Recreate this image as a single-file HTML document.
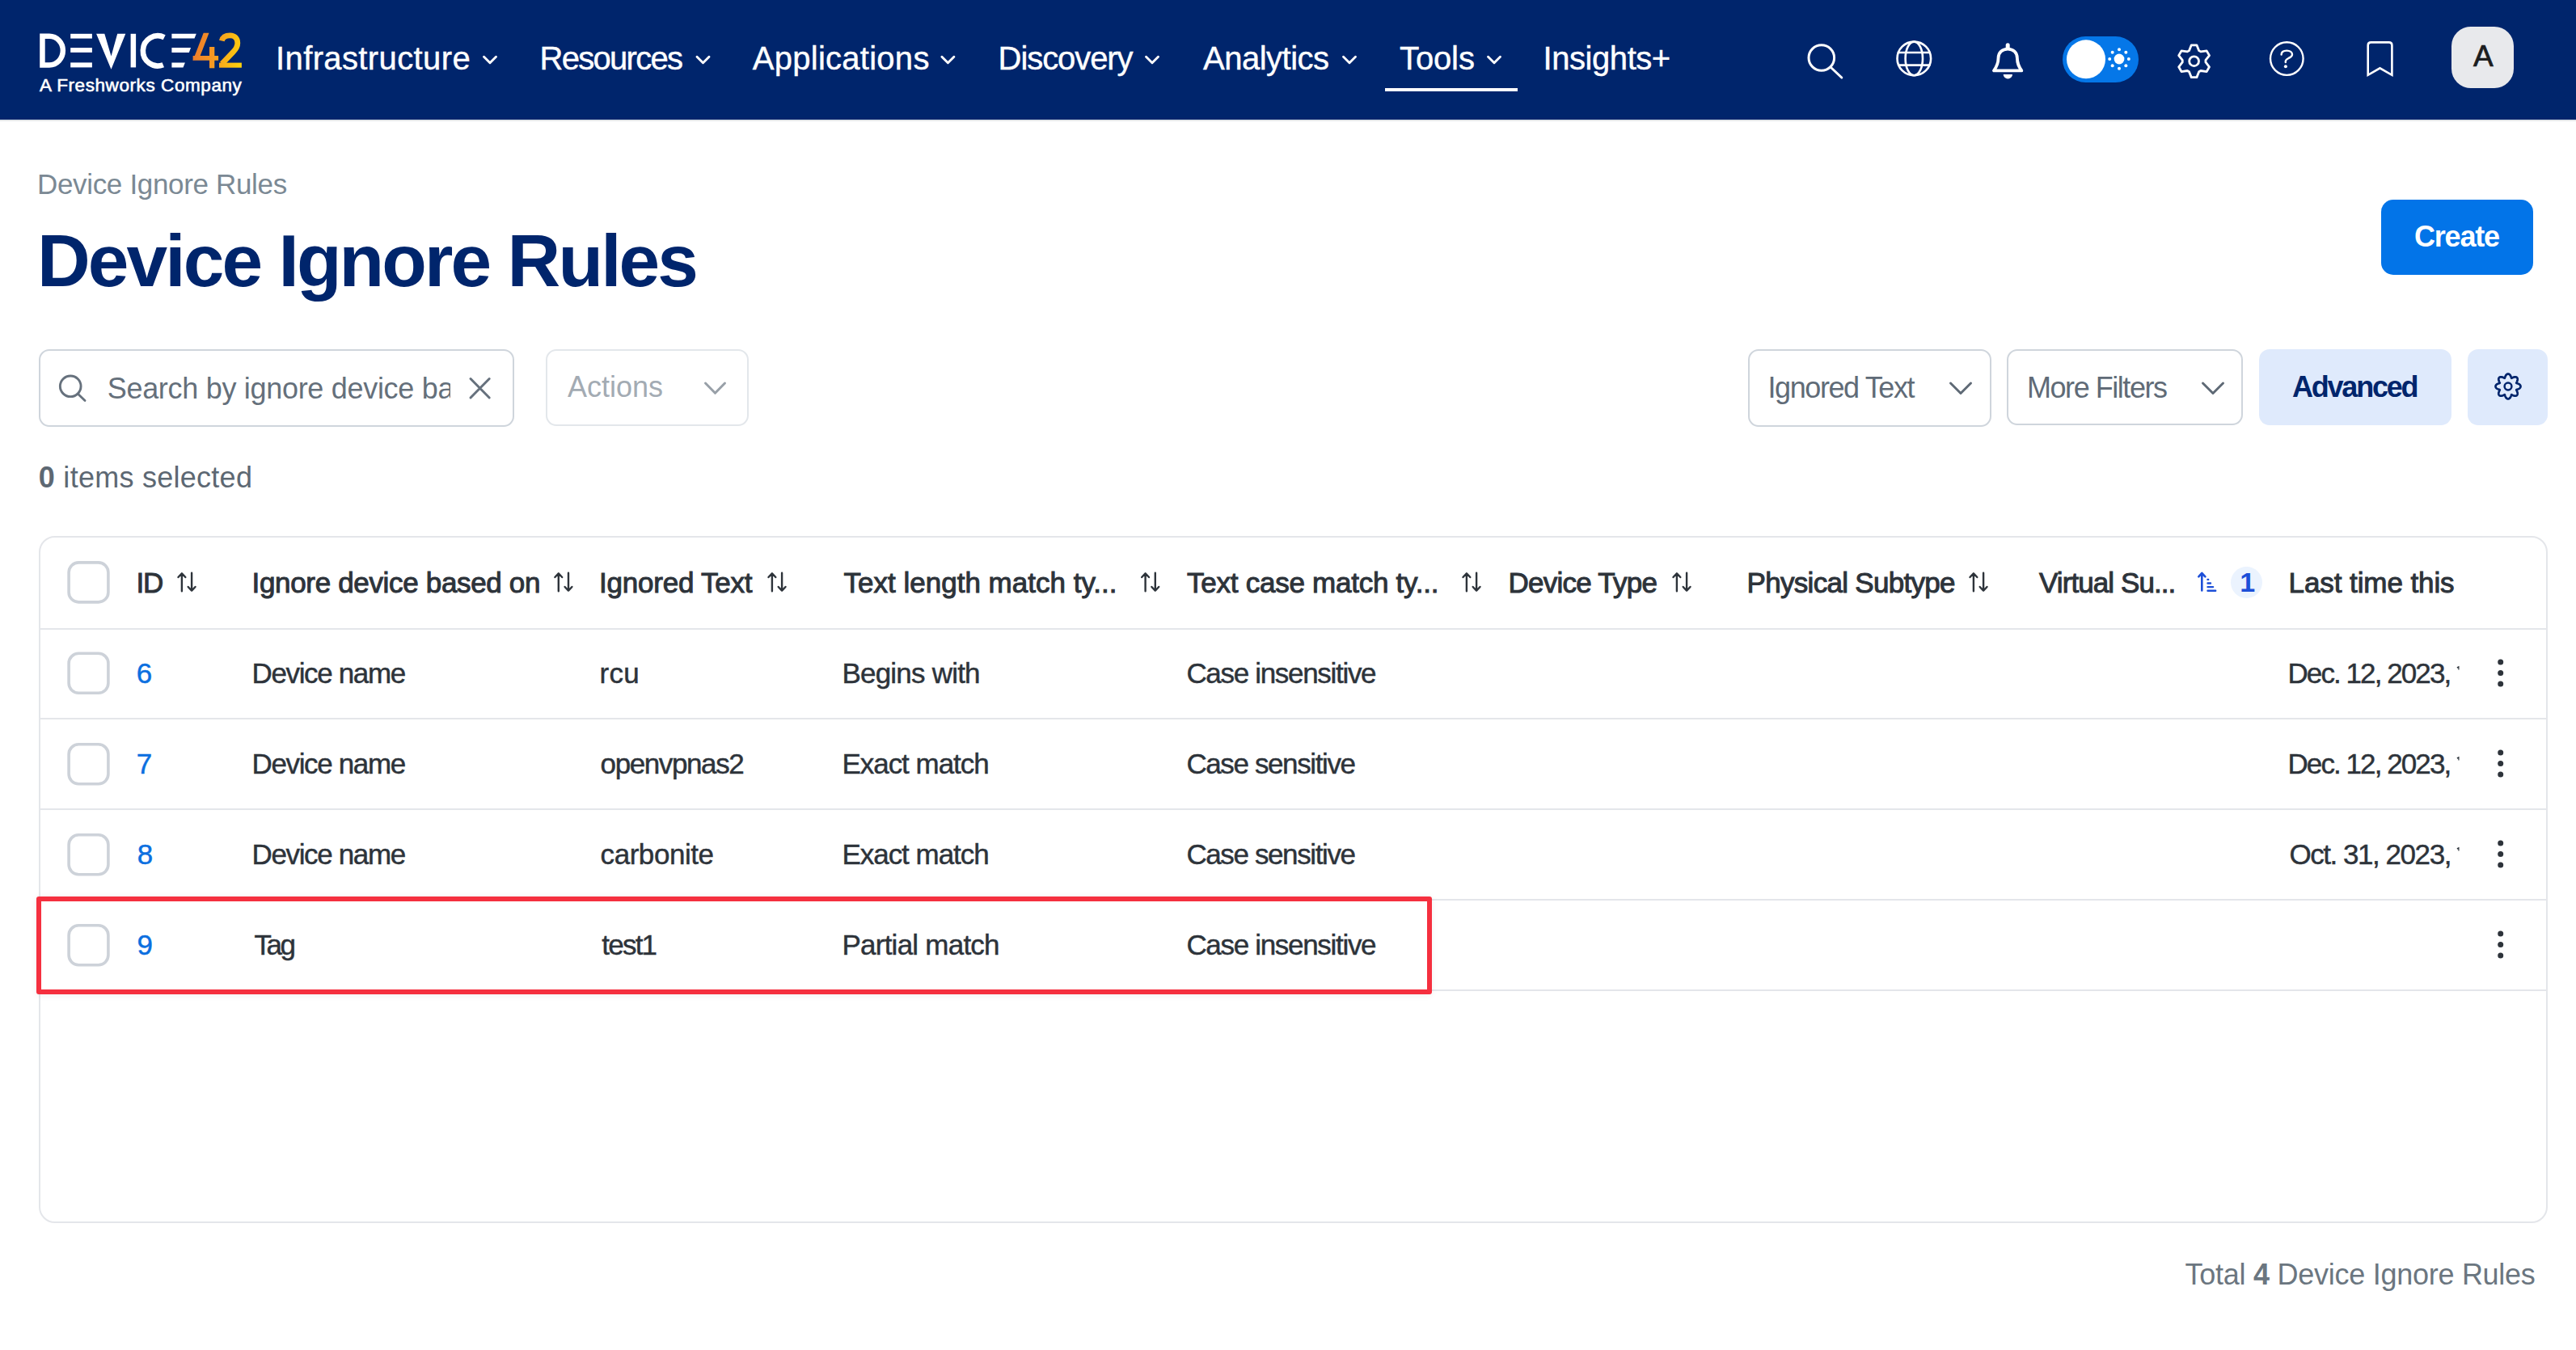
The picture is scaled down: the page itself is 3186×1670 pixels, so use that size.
<!DOCTYPE html>
<html><head><meta charset="utf-8"><title>Device Ignore Rules</title>
<style>
html,body{margin:0;padding:0;background:#fff;}
body{width:3186px;height:1670px;position:relative;overflow:hidden;font-family:"Liberation Sans",sans-serif;}
.t{position:absolute;white-space:nowrap;line-height:1;}
.clip{position:absolute;overflow:hidden;}
.box{position:absolute;box-sizing:border-box;}
svg{position:absolute;left:0;top:0;overflow:visible;}
.cb{position:absolute;box-sizing:border-box;width:52px;height:52px;border:3.3px solid #cdd2d8;border-radius:13px;background:#fff;}
</style></head>
<body>
<!-- header -->
<div class="box" style="left:0;top:0;width:3186px;height:148px;background:#00256c;"></div>
<div class="box" style="left:0;top:148px;width:3186px;height:2px;background:#e2e5e8;"></div>
<div class="box" style="left:1713px;top:109px;width:164px;height:4px;background:#fff;"></div>
<div class="box" style="left:3032px;top:33px;width:77px;height:76px;background:#e8e9ec;border-radius:24px;"></div>

<!-- create -->
<div class="box" style="left:2945px;top:247px;width:188px;height:93px;background:#0274e8;border-radius:15px;"></div>

<!-- toolbar -->
<div class="box" style="left:48px;top:432px;width:588px;height:96px;border:2px solid #cfd5dc;border-radius:13px;"></div>
<div class="box" style="left:675px;top:432px;width:251px;height:95px;border:2px solid #e3e7eb;border-radius:13px;"></div>
<div class="box" style="left:2162px;top:432px;width:301px;height:96px;border:2px solid #cfd5dc;border-radius:13px;"></div>
<div class="box" style="left:2482px;top:432px;width:292px;height:94px;border:2px solid #cfd5dc;border-radius:13px;"></div>
<div class="box" style="left:2794px;top:432px;width:238px;height:94px;background:#dfeafc;border-radius:13px;"></div>
<div class="box" style="left:3052px;top:432px;width:99px;height:94px;background:#dfeafc;border-radius:13px;"></div>

<!-- table -->
<div class="box" style="left:48px;top:663px;width:3103px;height:850px;border:2px solid #e4e6ea;border-radius:20px;"></div>
<div class="box" style="left:50px;top:777px;width:3099px;height:2px;background:#e4e6ea;"></div>
<div class="box" style="left:50px;top:888px;width:3099px;height:2px;background:#e4e6ea;"></div>
<div class="box" style="left:50px;top:1000px;width:3099px;height:2px;background:#e4e6ea;"></div>
<div class="box" style="left:50px;top:1112px;width:3099px;height:2px;background:#e4e6ea;"></div>
<div class="box" style="left:50px;top:1224px;width:3099px;height:2px;background:#e4e6ea;"></div>
<div class="box" style="left:2759px;top:701px;width:39px;height:39px;border-radius:50%;background:#ebf3fe;"></div>

<div class="t" style="left:341.00px;top:52.00px;font-size:40px;font-weight:normal;color:#fff;letter-spacing:0.385px;-webkit-text-stroke:0.4px #fff;">Infrastructure</div>
<div class="t" style="left:667.60px;top:52.00px;font-size:40px;font-weight:normal;color:#fff;letter-spacing:-1.725px;-webkit-text-stroke:0.4px #fff;">Resources</div>
<div class="t" style="left:930.80px;top:52.00px;font-size:40px;font-weight:normal;color:#fff;letter-spacing:0.264px;-webkit-text-stroke:0.4px #fff;">Applications</div>
<div class="t" style="left:1234.60px;top:52.00px;font-size:40px;font-weight:normal;color:#fff;letter-spacing:-1.075px;-webkit-text-stroke:0.4px #fff;">Discovery</div>
<div class="t" style="left:1488.00px;top:52.00px;font-size:40px;font-weight:normal;color:#fff;letter-spacing:-0.500px;-webkit-text-stroke:0.4px #fff;">Analytics</div>
<div class="t" style="left:1731.00px;top:52.00px;font-size:40px;font-weight:normal;color:#fff;letter-spacing:-0.125px;-webkit-text-stroke:0.4px #fff;">Tools</div>
<div class="t" style="left:1908.60px;top:52.00px;font-size:40px;font-weight:normal;color:#fff;letter-spacing:-0.450px;-webkit-text-stroke:0.4px #fff;">Insights+</div>
<div class="t" style="left:49.00px;top:94.67px;font-size:22.5px;font-weight:normal;color:#fff;letter-spacing:0.579px;-webkit-text-stroke:0.6px #fff;">A Freshworks Company</div>
<div class="t" style="left:3059.00px;top:51.35px;font-size:37px;font-weight:normal;color:#1c1d1f;letter-spacing:0.000px;-webkit-text-stroke:0.7px #1c1d1f;">A</div>
<div class="t" style="left:46.00px;top:210.25px;font-size:35px;font-weight:normal;color:#7b8994;letter-spacing:-0.333px;">Device Ignore Rules</div>
<div class="t" style="left:46.00px;top:277.35px;font-size:91px;font-weight:bold;color:#00256c;letter-spacing:-2.889px;">Device Ignore Rules</div>
<div class="t" style="left:2986.00px;top:274.90px;font-size:36px;font-weight:bold;color:#fff;letter-spacing:-1.200px;">Create</div>
<div class="clip" style="left:134px;top:443.40px;width:423px;height:58px;"><div class="t" style="left:-1.30px;top:20px;font-size:36px;font-weight:normal;color:#65707b;letter-spacing:-0.300px;">Search by ignore device based on</div></div>
<div class="t" style="left:702.00px;top:461.40px;font-size:36px;font-weight:normal;color:#a3abb3;letter-spacing:0.000px;">Actions</div>
<div class="t" style="left:47.80px;top:573.40px;font-size:36px;font-weight:normal;color:#5d6873;letter-spacing:0.267px;"><b>0</b> items selected</div>
<div class="t" style="left:2186.50px;top:462.40px;font-size:36px;font-weight:normal;color:#606b77;letter-spacing:-1.409px;">Ignored Text</div>
<div class="t" style="left:2507.00px;top:462.40px;font-size:36px;font-weight:normal;color:#606b77;letter-spacing:-1.455px;">More Filters</div>
<div class="t" style="left:2835.00px;top:461.40px;font-size:36px;font-weight:bold;color:#00256c;letter-spacing:-2.214px;">Advanced</div>
<div class="t" style="left:168.60px;top:702.75px;font-size:35px;font-weight:normal;color:#2d333a;letter-spacing:-1.300px;-webkit-text-stroke:1px #2d333a;">ID</div>
<div class="t" style="left:311.50px;top:702.75px;font-size:35px;font-weight:normal;color:#2d333a;letter-spacing:-0.329px;-webkit-text-stroke:1px #2d333a;">Ignore device based on</div>
<div class="t" style="left:741.00px;top:702.75px;font-size:35px;font-weight:normal;color:#2d333a;letter-spacing:-0.218px;-webkit-text-stroke:1px #2d333a;">Ignored Text</div>
<div class="t" style="left:1043.50px;top:702.75px;font-size:35px;font-weight:normal;color:#2d333a;letter-spacing:0.009px;-webkit-text-stroke:1px #2d333a;">Text length match ty...</div>
<div class="t" style="left:1468.00px;top:702.75px;font-size:35px;font-weight:normal;color:#2d333a;letter-spacing:-0.250px;-webkit-text-stroke:1px #2d333a;">Text case match ty...</div>
<div class="t" style="left:1865.60px;top:702.75px;font-size:35px;font-weight:normal;color:#2d333a;letter-spacing:-0.760px;-webkit-text-stroke:1px #2d333a;">Device Type</div>
<div class="t" style="left:2160.60px;top:702.75px;font-size:35px;font-weight:normal;color:#2d333a;letter-spacing:-0.707px;-webkit-text-stroke:1px #2d333a;">Physical Subtype</div>
<div class="t" style="left:2522.00px;top:702.75px;font-size:35px;font-weight:normal;color:#2d333a;letter-spacing:-0.917px;-webkit-text-stroke:1px #2d333a;">Virtual Su...</div>
<div class="t" style="left:2830.60px;top:702.75px;font-size:35px;font-weight:normal;color:#2d333a;letter-spacing:-0.092px;-webkit-text-stroke:1px #2d333a;">Last time this</div>
<div class="t" style="left:2770.20px;top:702.90px;font-size:34px;font-weight:bold;color:#1d4fd8;letter-spacing:0.000px;">1</div>
<div class="t" style="left:168.70px;top:815.25px;font-size:35px;font-weight:normal;color:#0b6fe0;letter-spacing:0.000px;-webkit-text-stroke:0.45px #0b6fe0;">6</div>
<div class="t" style="left:311.50px;top:815.25px;font-size:35px;font-weight:normal;color:#2d333a;letter-spacing:-1.350px;-webkit-text-stroke:0.45px #2d333a;">Device name</div>
<div class="t" style="left:741.60px;top:815.25px;font-size:35px;font-weight:normal;color:#2d333a;letter-spacing:0.200px;-webkit-text-stroke:0.45px #2d333a;">rcu</div>
<div class="t" style="left:1041.40px;top:815.25px;font-size:35px;font-weight:normal;color:#2d333a;letter-spacing:-0.780px;-webkit-text-stroke:0.45px #2d333a;">Begins with</div>
<div class="t" style="left:1467.40px;top:815.25px;font-size:35px;font-weight:normal;color:#2d333a;letter-spacing:-1.313px;-webkit-text-stroke:0.45px #2d333a;">Case insensitive</div>
<div class="t" style="left:2829.50px;top:815.25px;font-size:35px;font-weight:normal;color:#2d333a;letter-spacing:-1.923px;-webkit-text-stroke:0.45px #2d333a;">Dec. 12, 2023,</div>
<div class="t" style="left:168.70px;top:927.25px;font-size:35px;font-weight:normal;color:#0b6fe0;letter-spacing:0.000px;-webkit-text-stroke:0.45px #0b6fe0;">7</div>
<div class="t" style="left:311.50px;top:927.25px;font-size:35px;font-weight:normal;color:#2d333a;letter-spacing:-1.350px;-webkit-text-stroke:0.45px #2d333a;">Device name</div>
<div class="t" style="left:742.60px;top:927.25px;font-size:35px;font-weight:normal;color:#2d333a;letter-spacing:-1.400px;-webkit-text-stroke:0.45px #2d333a;">openvpnas2</div>
<div class="t" style="left:1041.40px;top:927.25px;font-size:35px;font-weight:normal;color:#2d333a;letter-spacing:-1.020px;-webkit-text-stroke:0.45px #2d333a;">Exact match</div>
<div class="t" style="left:1467.40px;top:927.25px;font-size:35px;font-weight:normal;color:#2d333a;letter-spacing:-1.385px;-webkit-text-stroke:0.45px #2d333a;">Case sensitive</div>
<div class="t" style="left:2829.50px;top:927.25px;font-size:35px;font-weight:normal;color:#2d333a;letter-spacing:-1.923px;-webkit-text-stroke:0.45px #2d333a;">Dec. 12, 2023,</div>
<div class="t" style="left:169.70px;top:1039.25px;font-size:35px;font-weight:normal;color:#0b6fe0;letter-spacing:0.000px;-webkit-text-stroke:0.45px #0b6fe0;">8</div>
<div class="t" style="left:311.50px;top:1039.25px;font-size:35px;font-weight:normal;color:#2d333a;letter-spacing:-1.350px;-webkit-text-stroke:0.45px #2d333a;">Device name</div>
<div class="t" style="left:742.60px;top:1039.25px;font-size:35px;font-weight:normal;color:#2d333a;letter-spacing:-0.450px;-webkit-text-stroke:0.45px #2d333a;">carbonite</div>
<div class="t" style="left:1041.40px;top:1039.25px;font-size:35px;font-weight:normal;color:#2d333a;letter-spacing:-1.020px;-webkit-text-stroke:0.45px #2d333a;">Exact match</div>
<div class="t" style="left:1467.40px;top:1039.25px;font-size:35px;font-weight:normal;color:#2d333a;letter-spacing:-1.385px;-webkit-text-stroke:0.45px #2d333a;">Case sensitive</div>
<div class="t" style="left:2831.50px;top:1039.25px;font-size:35px;font-weight:normal;color:#2d333a;letter-spacing:-1.462px;-webkit-text-stroke:0.45px #2d333a;">Oct. 31, 2023,</div>
<div class="t" style="left:169.50px;top:1151.25px;font-size:35px;font-weight:normal;color:#0b6fe0;letter-spacing:0.000px;-webkit-text-stroke:0.45px #0b6fe0;">9</div>
<div class="t" style="left:314.50px;top:1151.25px;font-size:35px;font-weight:normal;color:#2d333a;letter-spacing:-2.450px;-webkit-text-stroke:0.45px #2d333a;">Tag</div>
<div class="t" style="left:744.30px;top:1151.25px;font-size:35px;font-weight:normal;color:#2d333a;letter-spacing:-1.775px;-webkit-text-stroke:0.45px #2d333a;">test1</div>
<div class="t" style="left:1041.50px;top:1151.25px;font-size:35px;font-weight:normal;color:#2d333a;letter-spacing:-0.767px;-webkit-text-stroke:0.45px #2d333a;">Partial match</div>
<div class="t" style="left:1467.40px;top:1151.25px;font-size:35px;font-weight:normal;color:#2d333a;letter-spacing:-1.313px;-webkit-text-stroke:0.45px #2d333a;">Case insensitive</div>
<div class="t" style="left:2702.50px;top:1558.90px;font-size:36px;font-weight:normal;color:#6b7680;letter-spacing:-0.265px;">Total <b>4</b> Device Ignore Rules</div>

<!-- red highlight -->
<div class="box" style="left:45px;top:1109px;width:1726px;height:121px;border:6px solid #f5303f;border-radius:3px;box-shadow:0 1px 10px rgba(0,0,0,0.06);"></div>

<svg width="3186" height="1670" viewBox="0 0 3186 1670">
<defs><linearGradient id="g42" gradientUnits="userSpaceOnUse" x1="238" y1="60" x2="299" y2="70"><stop offset="0" stop-color="#ee7a2c"/><stop offset="0.45" stop-color="#f59a22"/><stop offset="1" stop-color="#fdd10c"/></linearGradient></defs>
<g fill="#fff">
<path d="M52.45,44.75 H61 A16.85,17.85 0 0 1 61,80.45 H52.45 Z" fill="none" stroke="#fff" stroke-width="6.5"/>
<rect x="87.2" y="41.8" width="26.7" height="5.8"/><rect x="87.2" y="59.1" width="26.7" height="5.8"/><rect x="87.2" y="77.4" width="26.7" height="6"/>
<path d="M119.1,41.8 L129.3,41.8 L137.5,69.6 L145.2,41.8 L155.3,41.8 L137.5,85.8 Z"/>
<rect x="161.6" y="41.8" width="6.5" height="41.6"/>
<path d="M203.2,46.2 A18.3,18.6 0 1 0 201.8,80.2" fill="none" stroke="#fff" stroke-width="6.6"/>
<path d="M212.4,41.8 H242.8 L240.5,47.6 H212.4 Z M212.4,59.1 H236.05 L233.8,64.9 H212.4 Z M212.4,77.4 H228.9 L226.5,83.4 H212.4 Z"/>
</g>
<g fill="url(#g42)"><path d="M251.7,40.8 L258.5,40.8 L247.6,69.1 L238.6,74.8 Z"/><path d="M238.6,69.1 H270.1 V74.8 H238.6 Z"/><rect x="259" y="58" width="6.3" height="26.3"/><path d="M274.3,50.5 C275.5,45.5 279.5,43.9 284.5,43.9 C290.3,43.9 293.8,47.6 293.8,53.2 C293.8,57.8 291.8,60.8 288.3,64.3 L274.5,78.8" fill="none" stroke="url(#g42)" stroke-width="6.8"/><rect x="271" y="77.6" width="27.9" height="6.1"/></g>
<path d="M598.5,70.3 L606,77.8 L613.5,70.3" fill="none" stroke="#fff" stroke-width="2.9" stroke-linecap="round" stroke-linejoin="round"/>
<path d="M862.0,70.3 L869.5,77.8 L877.0,70.3" fill="none" stroke="#fff" stroke-width="2.9" stroke-linecap="round" stroke-linejoin="round"/>
<path d="M1164.9,70.3 L1172.4,77.8 L1179.9,70.3" fill="none" stroke="#fff" stroke-width="2.9" stroke-linecap="round" stroke-linejoin="round"/>
<path d="M1417.5,70.3 L1425,77.8 L1432.5,70.3" fill="none" stroke="#fff" stroke-width="2.9" stroke-linecap="round" stroke-linejoin="round"/>
<path d="M1661.5,70.3 L1669,77.8 L1676.5,70.3" fill="none" stroke="#fff" stroke-width="2.9" stroke-linecap="round" stroke-linejoin="round"/>
<path d="M1840.5,70.3 L1848,77.8 L1855.5,70.3" fill="none" stroke="#fff" stroke-width="2.9" stroke-linecap="round" stroke-linejoin="round"/>
<g fill="none" stroke="#fff" stroke-linecap="round" stroke-linejoin="round">
<circle cx="2252.8" cy="71.5" r="15.8" stroke-width="3"/><path d="M2264.5,83.5 L2277.8,96" stroke-width="3"/>
<circle cx="2367.3" cy="72.4" r="20.8" stroke-width="2.6"/><ellipse cx="2367.3" cy="72.4" rx="10.7" ry="20.8" stroke-width="2.6"/><path d="M2347.9,65 H2386.7 M2348.2,80.6 H2386.4" stroke-width="2.6"/>
<path d="M2466,87.4 L2500.3,87.4 C2497,82.5 2494.9,79 2494.9,72 C2494.9,65 2490,60.7 2483.2,60.7 C2476.4,60.7 2471.5,65 2471.5,72 C2471.5,79 2469.5,82.5 2466,87.4 Z" stroke-width="3.8"/><path d="M2483.2,55.8 V58.5" stroke-width="5"/>
<path d="M2719.69,62.65 L2716.93,55.78 L2710.27,55.78 L2707.51,62.65 L2705.34,63.90 L2698.01,62.85 L2694.68,68.63 L2699.25,74.44 L2699.25,76.96 L2694.68,82.77 L2698.01,88.55 L2705.34,87.50 L2707.51,88.75 L2710.27,95.62 L2716.93,95.62 L2719.69,88.75 L2721.86,87.50 L2729.19,88.55 L2732.52,82.77 L2727.95,76.96 L2727.95,74.44 L2732.52,68.63 L2729.19,62.85 L2721.86,63.90 Z" stroke-width="2.8"/><circle cx="2713.6" cy="75.7" r="5.9" stroke-width="2.8"/>
<circle cx="2828.3" cy="72.6" r="20.3" stroke-width="2.4"/><path d="M2821.6,67.6 C2821.6,64.4 2824.3,62.6 2828.3,62.6 C2832.3,62.6 2835,64.6 2835,67.3 C2835,69.9 2832.8,71 2830.2,72.2 C2828.2,73.2 2826.8,74 2826.8,75.8 V77" stroke-width="2.4"/>
<path d="M2928.7,92.8 V56.2 Q2928.7,52.4 2932.5,52.4 H2954.6 Q2958.4,52.4 2958.4,56.2 V92.8 L2943.5,84.3 Z" stroke-width="2.6" stroke-linejoin="miter"/>
</g>
<g fill="#fff"><path d="M2477.7,91.9 H2489 A5.65,5.5 0 0 1 2477.7,91.9 Z"/><circle cx="2826.9" cy="82.3" r="2"/></g>
<rect x="2551" y="45" width="94" height="57" rx="28.5" fill="#0577e8"/><circle cx="2580" cy="73.3" r="24" fill="#fff"/><circle cx="2621" cy="73" r="6.4" fill="#fff"/>
<circle cx="2621.00" cy="61.20" r="2" fill="#fff"/>
<circle cx="2612.66" cy="64.66" r="2" fill="#fff"/>
<circle cx="2609.20" cy="73.00" r="2" fill="#fff"/>
<circle cx="2612.66" cy="81.34" r="2" fill="#fff"/>
<circle cx="2621.00" cy="84.80" r="2" fill="#fff"/>
<circle cx="2629.34" cy="81.34" r="2" fill="#fff"/>
<circle cx="2632.80" cy="73.00" r="2" fill="#fff"/>
<circle cx="2629.34" cy="64.66" r="2" fill="#fff"/>
<g fill="none" stroke="#66717d" stroke-width="2.9" stroke-linecap="round"><circle cx="87.2" cy="477.8" r="12.85"/><path d="M96.9,487.8 L105,495.5"/><path d="M582,468.5 L605.2,492 M605.2,468.5 L582,492" stroke-width="3"/></g>
<path d="M872.5,474 L884.5,486.3 L896.5,474" fill="none" stroke="#98a0a8" stroke-width="3" stroke-linecap="round" stroke-linejoin="round"/>
<path d="M2412.5,474 L2425,486.5 L2437.5,474" fill="none" stroke="#5f6a76" stroke-width="3" stroke-linecap="round" stroke-linejoin="round"/>
<path d="M2724.5,474 L2737,486.5 L2749.5,474" fill="none" stroke="#5f6a76" stroke-width="3" stroke-linecap="round" stroke-linejoin="round"/>
<path d="M3117.50,478.00 L3117.47,477.60 L3117.36,477.19 L3117.19,476.80 L3116.95,476.43 L3116.66,476.07 L3116.31,475.73 L3115.91,475.42 L3115.48,475.14 L3115.01,474.88 L3114.52,474.65 L3114.01,474.44 L3113.51,474.26 L3113.01,474.10 L3112.55,473.95 L3112.16,473.79 L3112.32,473.40 L3112.55,472.97 L3112.78,472.51 L3113.01,472.02 L3113.22,471.52 L3113.41,471.01 L3113.56,470.50 L3113.66,469.98 L3113.72,469.48 L3113.73,469.00 L3113.69,468.54 L3113.59,468.10 L3113.43,467.71 L3113.22,467.35 L3112.96,467.04 L3112.65,466.78 L3112.29,466.57 L3111.90,466.41 L3111.46,466.31 L3111.00,466.27 L3110.52,466.28 L3110.02,466.34 L3109.50,466.44 L3108.99,466.59 L3108.48,466.78 L3107.98,466.99 L3107.49,467.22 L3107.03,467.45 L3106.60,467.68 L3106.21,467.84 L3106.05,467.45 L3105.90,466.99 L3105.74,466.49 L3105.56,465.99 L3105.35,465.48 L3105.12,464.99 L3104.86,464.52 L3104.58,464.09 L3104.27,463.69 L3103.93,463.34 L3103.57,463.05 L3103.20,462.81 L3102.81,462.64 L3102.40,462.53 L3102.00,462.50 L3101.60,462.53 L3101.19,462.64 L3100.80,462.81 L3100.43,463.05 L3100.07,463.34 L3099.73,463.69 L3099.42,464.09 L3099.14,464.52 L3098.88,464.99 L3098.65,465.48 L3098.44,465.99 L3098.26,466.49 L3098.10,466.99 L3097.95,467.45 L3097.79,467.84 L3097.40,467.68 L3096.97,467.45 L3096.51,467.22 L3096.02,466.99 L3095.52,466.78 L3095.01,466.59 L3094.50,466.44 L3093.98,466.34 L3093.48,466.28 L3093.00,466.27 L3092.54,466.31 L3092.10,466.41 L3091.71,466.57 L3091.35,466.78 L3091.04,467.04 L3090.78,467.35 L3090.57,467.71 L3090.41,468.10 L3090.31,468.54 L3090.27,469.00 L3090.28,469.48 L3090.34,469.98 L3090.44,470.50 L3090.59,471.01 L3090.78,471.52 L3090.99,472.02 L3091.22,472.51 L3091.45,472.97 L3091.68,473.40 L3091.84,473.79 L3091.45,473.95 L3090.99,474.10 L3090.49,474.26 L3089.99,474.44 L3089.48,474.65 L3088.99,474.88 L3088.52,475.14 L3088.09,475.42 L3087.69,475.73 L3087.34,476.07 L3087.05,476.43 L3086.81,476.80 L3086.64,477.19 L3086.53,477.60 L3086.50,478.00 L3086.53,478.40 L3086.64,478.81 L3086.81,479.20 L3087.05,479.57 L3087.34,479.93 L3087.69,480.27 L3088.09,480.58 L3088.52,480.86 L3088.99,481.12 L3089.48,481.35 L3089.99,481.56 L3090.49,481.74 L3090.99,481.90 L3091.45,482.05 L3091.84,482.21 L3091.68,482.60 L3091.45,483.03 L3091.22,483.49 L3090.99,483.98 L3090.78,484.48 L3090.59,484.99 L3090.44,485.50 L3090.34,486.02 L3090.28,486.52 L3090.27,487.00 L3090.31,487.46 L3090.41,487.90 L3090.57,488.29 L3090.78,488.65 L3091.04,488.96 L3091.35,489.22 L3091.71,489.43 L3092.10,489.59 L3092.54,489.69 L3093.00,489.73 L3093.48,489.72 L3093.98,489.66 L3094.50,489.56 L3095.01,489.41 L3095.52,489.22 L3096.02,489.01 L3096.51,488.78 L3096.97,488.55 L3097.40,488.32 L3097.79,488.16 L3097.95,488.55 L3098.10,489.01 L3098.26,489.51 L3098.44,490.01 L3098.65,490.52 L3098.88,491.01 L3099.14,491.48 L3099.42,491.91 L3099.73,492.31 L3100.07,492.66 L3100.43,492.95 L3100.80,493.19 L3101.19,493.36 L3101.60,493.47 L3102.00,493.50 L3102.40,493.47 L3102.81,493.36 L3103.20,493.19 L3103.57,492.95 L3103.93,492.66 L3104.27,492.31 L3104.58,491.91 L3104.86,491.48 L3105.12,491.01 L3105.35,490.52 L3105.56,490.01 L3105.74,489.51 L3105.90,489.01 L3106.05,488.55 L3106.21,488.16 L3106.60,488.32 L3107.03,488.55 L3107.49,488.78 L3107.98,489.01 L3108.48,489.22 L3108.99,489.41 L3109.50,489.56 L3110.02,489.66 L3110.52,489.72 L3111.00,489.73 L3111.46,489.69 L3111.90,489.59 L3112.29,489.43 L3112.65,489.22 L3112.96,488.96 L3113.22,488.65 L3113.43,488.29 L3113.59,487.90 L3113.69,487.46 L3113.73,487.00 L3113.72,486.52 L3113.66,486.02 L3113.56,485.50 L3113.41,484.99 L3113.22,484.48 L3113.01,483.98 L3112.78,483.49 L3112.55,483.03 L3112.32,482.60 L3112.16,482.21 L3112.55,482.05 L3113.01,481.90 L3113.51,481.74 L3114.01,481.56 L3114.52,481.35 L3115.01,481.12 L3115.48,480.86 L3115.91,480.58 L3116.31,480.27 L3116.66,479.93 L3116.95,479.57 L3117.19,479.20 L3117.36,478.81 L3117.47,478.40 Z" fill="none" stroke="#00256c" stroke-width="2.7" stroke-linejoin="round"/><circle cx="3102" cy="478" r="4.4" fill="none" stroke="#00256c" stroke-width="2.5"/>
<g fill="none" stroke="#2d333a" stroke-width="2.4" stroke-linecap="round" stroke-linejoin="round">
<path d="M224.9,731.3 V709.5 M220.5,714 L224.9,709.3 L229.3,714 M237.1,708.7 V730.5 M232.7,726 L237.1,730.7 L241.5,726"/>
<path d="M690.8,731.3 V709.5 M686.4,714 L690.8,709.3 L695.1999999999999,714 M703.0,708.7 V730.5 M698.6,726 L703.0,730.7 L707.4,726"/>
<path d="M954.9,731.3 V709.5 M950.5,714 L954.9,709.3 L959.3,714 M967.1,708.7 V730.5 M962.7,726 L967.1,730.7 L971.5,726"/>
<path d="M1416.6000000000001,731.3 V709.5 M1412.2,714 L1416.6000000000001,709.3 L1421.0,714 M1428.8,708.7 V730.5 M1424.4,726 L1428.8,730.7 L1433.2,726"/>
<path d="M1813.9,731.3 V709.5 M1809.5,714 L1813.9,709.3 L1818.3,714 M1826.1,708.7 V730.5 M1821.7,726 L1826.1,730.7 L1830.5,726"/>
<path d="M2073.9,731.3 V709.5 M2069.5,714 L2073.9,709.3 L2078.3,714 M2086.1,708.7 V730.5 M2081.7,726 L2086.1,730.7 L2090.5,726"/>
<path d="M2440.9,731.3 V709.5 M2436.5,714 L2440.9,709.3 L2445.3,714 M2453.1,708.7 V730.5 M2448.7,726 L2453.1,730.7 L2457.5,726"/>
</g>
<g fill="none" stroke="#1d4fd8" stroke-width="2.6" stroke-linecap="round" stroke-linejoin="round"><path d="M2723.3,730.5 V709.5 M2719.3,713.3 L2723.3,709 L2727.4,713.3"/><path d="M2730.5,716.9 H2731.2 M2730.5,721.5 H2734 M2730.5,726.1 H2737.1 M2730.5,730.7 H2740.2" stroke-width="2.4"/></g>
<rect x="85.1" y="695.9" width="48.8" height="49.0" rx="12.2" fill="#fff" stroke="#cdd2d9" stroke-width="3.6"/>
<rect x="85.1" y="808.3" width="48.8" height="49.0" rx="12.2" fill="#fff" stroke="#cdd2d9" stroke-width="3.6"/>
<rect x="85.1" y="920.8" width="48.8" height="49.0" rx="12.2" fill="#fff" stroke="#cdd2d9" stroke-width="3.6"/>
<rect x="85.1" y="1032.8" width="48.8" height="49.0" rx="12.2" fill="#fff" stroke="#cdd2d9" stroke-width="3.6"/>
<rect x="85.1" y="1144.8" width="48.8" height="49.0" rx="12.2" fill="#fff" stroke="#cdd2d9" stroke-width="3.6"/>
<path d="M3038.6,825.2 L3041.5,823.8 V828.4 H3040.3 V826.2 L3039.2,826.8 Z" fill="#2d333a"/>
<path d="M3038.6,937.2 L3041.5,935.8 V940.4 H3040.3 V938.2 L3039.2,938.8 Z" fill="#2d333a"/>
<path d="M3038.6,1049.2 L3041.5,1047.8 V1052.4 H3040.3 V1050.2 L3039.2,1050.8 Z" fill="#2d333a"/>
<circle cx="3092.7" cy="819.1" r="3.5" fill="#2d333a"/>
<circle cx="3092.7" cy="832.5" r="3.5" fill="#2d333a"/>
<circle cx="3092.7" cy="845.9" r="3.5" fill="#2d333a"/>
<circle cx="3092.7" cy="931.1" r="3.5" fill="#2d333a"/>
<circle cx="3092.7" cy="944.5" r="3.5" fill="#2d333a"/>
<circle cx="3092.7" cy="957.9" r="3.5" fill="#2d333a"/>
<circle cx="3092.7" cy="1043.1" r="3.5" fill="#2d333a"/>
<circle cx="3092.7" cy="1056.5" r="3.5" fill="#2d333a"/>
<circle cx="3092.7" cy="1069.9" r="3.5" fill="#2d333a"/>
<circle cx="3092.7" cy="1155.1" r="3.5" fill="#2d333a"/>
<circle cx="3092.7" cy="1168.5" r="3.5" fill="#2d333a"/>
<circle cx="3092.7" cy="1181.9" r="3.5" fill="#2d333a"/>
</svg>
</body></html>
